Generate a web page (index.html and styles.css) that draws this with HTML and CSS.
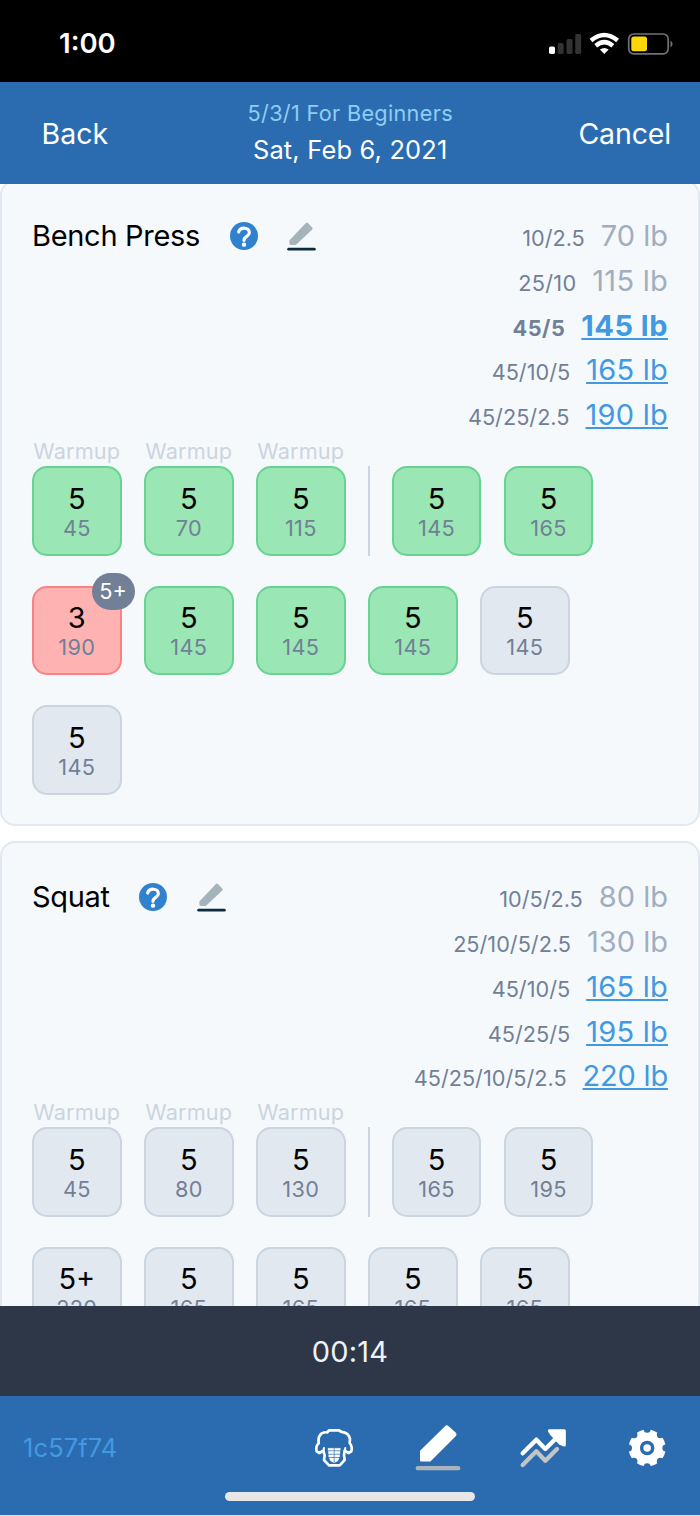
FILE: index.html
```html
<!DOCTYPE html>
<html lang="en">
<head>
<meta charset="utf-8">
<title>5/3/1 For Beginners</title>
<link rel="stylesheet" href="styles.css">
</head>
<body>
<svg class="defs" aria-hidden="true">
  <symbol id="help" viewBox="29 35 84 84">
    <circle cx="71" cy="77" r="42" fill="#3182ce"/>
    <path d="M55 65C59 50 87 49 87 67C87 79 71 77 71 90" fill="none" stroke="#fff" stroke-width="9.500" stroke-linecap="round"/>
    <circle cx="71" cy="103" r="6.500" fill="#fff"/>
  </symbol>
  <symbol id="edit" viewBox="202 34 86 86">
    <path d="M213 90L261 40L274 53L227 98H213Z" fill="#a5b3bb" stroke="#a5b3bb" stroke-width="8" stroke-linejoin="round"/>
    <path d="M207 114.500H283" stroke="#0d2b3e" stroke-width="8.500" stroke-linecap="round"/>
  </symbol>
</svg>
<div class="screen">
  <div class="status">
    <span class="clock">1:00</span>
    <svg class="status-icons" viewBox="0 0 126 24" width="126" height="24">
      <rect x="1" y="15.500" width="6" height="7.500" rx="1.700" fill="#fff"/>
      <rect x="9.700" y="12" width="6" height="11" rx="1.700" fill="#333"/>
      <rect x="18.500" y="8" width="6" height="15" rx="1.700" fill="#333"/>
      <rect x="27.200" y="3" width="6" height="20" rx="1.700" fill="#333"/>
      <g fill="none" stroke="#fff" stroke-width="4.400">
        <path d="M43 9.500Q56.300 -1.500 69.600 9.500"/>
        <path d="M47.700 14.800Q56.300 7.500 64.900 14.800"/>
      </g>
      <path d="M51.900 18.600Q56.300 15.400 60.700 18.600L56.300 23Z" fill="#fff"/>
      <rect x="80.700" y="3" width="39.500" height="19.800" rx="5" fill="none" stroke="#727272" stroke-width="1.700"/>
      <rect x="83.300" y="5.500" width="15.700" height="14.800" rx="2.500" fill="#ffd60a"/>
      <path d="M122.500 9.500Q126.700 13 122.500 16.500Z" fill="#727272"/>
    </svg>
  </div>
  <header class="header">
    <a class="head-link">Back</a>
    <div class="head-title"><div class="program">5/3/1 For Beginners</div><div class="date">Sat, Feb 6, 2021</div></div>
    <a class="head-link cancel">Cancel</a>
  </header>
  <main class="content">
    <section class="card">
      <div class="card-head">
        <h2 class="name">Bench Press</h2>
        <svg class="help"><use href="#help"/></svg>
        <svg class="edit"><use href="#edit"/></svg>
        <div class="weights">
          <div class="weight"><span class="plates">10/2.5</span><span class="lb">70 lb</span></div>
          <div class="weight"><span class="plates loose">25/10</span><span class="lb loose">115 lb</span></div>
          <div class="weight current"><span class="plates">45/5</span><span class="lb link">145 lb</span></div>
          <div class="weight"><span class="plates">45/10/5</span><span class="lb link loose">165 lb</span></div>
          <div class="weight"><span class="plates">45/25/2.5</span><span class="lb link loose">190 lb</span></div>
        </div>
      </div>
      <div class="sets">
        <div class="set done"><div class="label">Warmup</div><div class="box"><b>5</b><i>45</i></div></div>
        <div class="set done"><div class="label">Warmup</div><div class="box"><b>5</b><i>70</i></div></div>
        <div class="set done"><div class="label">Warmup</div><div class="box"><b>5</b><i>115</i></div></div>
        <div class="divider"></div>
        <div class="set done"><div class="box"><b>5</b><i>145</i></div></div>
        <div class="set done"><div class="box"><b>5</b><i>165</i></div></div>
        <div class="set failed"><div class="box"><b>3</b><i>190</i><span class="badge">5+</span></div></div>
        <div class="set done"><div class="box"><b>5</b><i>145</i></div></div>
        <div class="set done"><div class="box"><b>5</b><i>145</i></div></div>
        <div class="set done"><div class="box"><b>5</b><i>145</i></div></div>
        <div class="set"><div class="box"><b>5</b><i>145</i></div></div>
        <div class="set"><div class="box"><b>5</b><i>145</i></div></div>
      </div>
    </section>
    <section class="card">
      <div class="card-head">
        <h2 class="name">Squat</h2>
        <svg class="help"><use href="#help"/></svg>
        <svg class="edit"><use href="#edit"/></svg>
        <div class="weights">
          <div class="weight"><span class="plates">10/5/2.5</span><span class="lb">80 lb</span></div>
          <div class="weight"><span class="plates">25/10/5/2.5</span><span class="lb">130 lb</span></div>
          <div class="weight"><span class="plates">45/10/5</span><span class="lb link loose">165 lb</span></div>
          <div class="weight"><span class="plates">45/25/5</span><span class="lb link loose">195 lb</span></div>
          <div class="weight"><span class="plates">45/25/10/5/2.5</span><span class="lb link tight">220 lb</span></div>
        </div>
      </div>
      <div class="sets">
        <div class="set"><div class="label">Warmup</div><div class="box"><b>5</b><i>45</i></div></div>
        <div class="set"><div class="label">Warmup</div><div class="box"><b>5</b><i>80</i></div></div>
        <div class="set"><div class="label">Warmup</div><div class="box"><b>5</b><i>130</i></div></div>
        <div class="divider"></div>
        <div class="set"><div class="box"><b>5</b><i>165</i></div></div>
        <div class="set"><div class="box"><b>5</b><i>195</i></div></div>
        <div class="set"><div class="box"><b>5+</b><i>220</i></div></div>
        <div class="set"><div class="box"><b>5</b><i>165</i></div></div>
        <div class="set"><div class="box"><b>5</b><i>165</i></div></div>
        <div class="set"><div class="box"><b>5</b><i>165</i></div></div>
        <div class="set"><div class="box"><b>5</b><i>165</i></div></div>
      </div>
    </section>
  </main>
  <div class="timer">00:14</div>
  <nav class="nav">
    <div class="nav-row">
      <span class="hash">1c57f74</span>
      <div class="nav-icons">
        <svg viewBox="27 69 150 150">
          <path d="M87 91H118Q122 97 132 97Q146 100 150 117L149 129Q158 140 154 154L146 159L134 152L132 166L134 180L119 196H87L72 180L74 166L70 152L58 159L50 154Q46 139 56 130Q53 109 65 100Q73 96 82 97Z" fill="none" stroke="#fff" stroke-width="8" stroke-linejoin="round"/>
          <path d="M134 152L136 144M70 152L72 144" stroke="#fff" stroke-width="6" stroke-linecap="round"/>
          <path d="M84 145H101V151H84ZM104 145H121V151H104ZM85 154H101V161H85ZM104 154H120V161H104ZM86 164H101V171H86ZM104 164H119V171H104ZM88 174H101V188L91 182ZM104 174H117L114 182L104 188Z" fill="#fff" stroke="#fff" stroke-linejoin="round"/>
        </svg>
        <svg viewBox="340.500 69 150 150">
          <path d="M365 154L439 81Q442 78 445 81L466 100Q469 103 466 106L391 181H365Z" fill="#fff" stroke="#fff" stroke-width="7" stroke-linejoin="round"/>
          <path d="M355 204.500H476" stroke="#a9b3bc" stroke-width="13" stroke-linecap="round"/>
        </svg>
        <svg viewBox="54 69 150 150">
          <path d="M68 195L109 154L136 182L171 147" fill="none" stroke="#c2c4c7" stroke-width="13" stroke-linecap="round" stroke-linejoin="round"/>
          <path d="M68 160L109 119L136 147L178 105" fill="none" stroke="#fff" stroke-width="13" stroke-linecap="round" stroke-linejoin="round"/>
          <path d="M148 92H193V135L180 130L155 103Z" fill="#fff" stroke="#fff" stroke-width="9" stroke-linejoin="round"/>
        </svg>
        <svg viewBox="367 69 150 150">
          <circle cx="442.500" cy="144" r="55.500" fill="#fff"/>
          <g fill="#2b6cb0">
            <circle cx="442.500" cy="88" r="10.500"/><circle cx="442.500" cy="200" r="10.500"/>
            <circle cx="386.500" cy="144" r="10.500"/><circle cx="498.500" cy="144" r="10.500"/>
            <circle cx="402.900" cy="104.400" r="10.500"/><circle cx="482.100" cy="104.400" r="10.500"/>
            <circle cx="402.900" cy="183.600" r="10.500"/><circle cx="482.100" cy="183.600" r="10.500"/>
          </g>
          <circle cx="442.500" cy="144" r="16.500" fill="none" stroke="#2b6cb0" stroke-width="10.500"/>
        </svg>
      </div>
    </div>
    <div class="home-bar"></div>
  </nav>
</div>
</body>
</html>
```
FILE: styles.css
```css
* { box-sizing: border-box; }
body { margin: 0; background: #fff; font-family: Inter, "Liberation Sans", sans-serif; }
.defs { display: none; }
.screen { display: flex; flex-direction: column; width: 700px; height: 1516px; overflow: hidden; }
.status { flex: none; display: flex; align-items: center; justify-content: space-between; height: 82px; padding: 4px 26px 0 59px; background: #000; }
.clock { color: #fff; font-size: 27.5px; font-weight: 600; letter-spacing: 0; }
.header { position: relative; z-index: 1; flex: none; display: flex; align-items: center; justify-content: space-between; height: 102px; padding: 0 29px 0 41.5px; background: #2b6cb0; color: #fff; }
.head-link { width: 120px; font-size: 28.5px; letter-spacing: 0; }
.cancel { text-align: right; letter-spacing: -.15px; }
.head-title { text-align: center; padding: 0 12px 3px 0; }
.program { height: 35px; line-height: 35px; color: #90cdf4; font-size: 21.7px; letter-spacing: .3px; }
.date { height: 37px; line-height: 37px; font-size: 25.4px; letter-spacing: .2px; }
.content { flex: 1; min-height: 0; display: flex; flex-direction: column; gap: 15px; margin-top: -4px; overflow: hidden; }
.card { flex: none; padding: 32px 30px 29.2px; border: 2px solid #e2e8f0; border-radius: 15px; background: #f5f9fc; }
.card-head { display: flex; align-items: flex-start; height: 223px; }
.name { margin: 0; line-height: 44px; font-size: 29px; font-weight: 400; letter-spacing: -.3px; color: #000; }
.help { width: 28px; height: 28px; margin: 8px 0 0 29.5px; }
.edit { width: 29px; height: 29px; margin: 8px 0 0 29.5px; }
.weights { margin-left: auto; }
.weight { display: flex; justify-content: flex-end; align-items: baseline; height: 44.8px; line-height: 44px; gap: 16px; }
.plates { color: #718096; font-size: 21.7px; }
.lb { color: #a0aec0; font-size: 29px; }
.link { color: #4299e1; text-decoration: underline; text-decoration-thickness: 2px; text-underline-offset: 2px; text-decoration-skip-ink: none; }
.loose { letter-spacing: .25px; }
.tight { letter-spacing: -.2px; }
.current { font-weight: 700; letter-spacing: .5px; }
.sets { display: flex; flex-wrap: wrap; align-items: flex-end; gap: 30px 22.4px; margin-right: -6px; }
.label { height: 29.2px; line-height: 28px; margin: 0 -5px; text-align: center; color: #cbd5e0; font-size: 21.7px; letter-spacing: .15px; }
.box { position: relative; display: flex; flex-direction: column; align-items: center; width: 89.6px; height: 89.6px; padding-top: 14.5px; border: 2px solid #cbd5e0; border-radius: 15px; background: #e2e8f0; }
.box b { height: 33px; line-height: 32px; color: #000; font-size: 29px; font-weight: 400; }
.box i { height: 25px; line-height: 24px; color: #718096; font-size: 21.7px; font-style: normal; letter-spacing: .3px; }
.done .box { background: #9ae6b4; border-color: #68d391; }
.failed .box { background: #feb2b2; border-color: #fc8181; }
.badge { position: absolute; top: -15px; right: -15px; width: 43px; height: 37px; line-height: 37px; border-radius: 19px; text-align: center; background: #718096; color: #fff; font-size: 21.7px; }
.divider { width: 2px; height: 89.6px; margin-right: -.6px; background: #cbd5e0; }
.timer { position: relative; flex: none; height: 90px; line-height: 92px; text-align: center; background: #2d3748; color: #edf2f7; font-size: 29px; letter-spacing: .2px; }
.nav { flex: none; height: 120px; background: #2b6cb0; border-bottom: 1px solid #d5e1ef; }
.nav-row { display: flex; align-items: center; justify-content: space-between; height: 96px; padding: 7px 28px 0 23px; }
.hash { color: #4299e1; font-size: 25.4px; letter-spacing: .15px; }
.nav-icons { display: flex; gap: 54.5px; }
.nav-icons svg { width: 50px; height: 50px; }
.home-bar { width: 250px; height: 9px; margin: 0 auto; border-radius: 5px; background: #e7e7e7; }
```
